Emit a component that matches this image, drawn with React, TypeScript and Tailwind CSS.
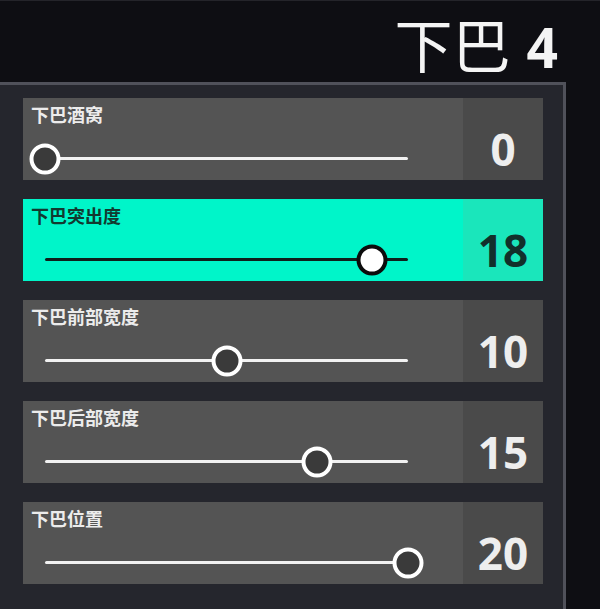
import React from "react";

type Row = { label: string; value: number; active?: boolean };

const rows: Row[] = [
  { label: "下巴酒窝", value: 0 },
  { label: "下巴突出度", value: 18, active: true },
  { label: "下巴前部宽度", value: 10 },
  { label: "下巴后部宽度", value: 15 },
  { label: "下巴位置", value: 20 },
];

const cjk = { fontFamily: '"Noto Sans CJK SC", "Noto Sans", sans-serif' };
const num = { fontFamily: '"Noto Sans", "Roboto", sans-serif' };

function SliderRow({ label, value, active }: Row) {
  const pct = (value / 20) * 100;
  return (
    <div
      className={`flex h-[82px] w-[520px] ${active ? "bg-[#00f5c9]" : "bg-[#545454]"}`}
    >
      <div className="flex-1 flex flex-col">
        <div
          className={`pt-[7px] pl-[8px] text-[18px] leading-[18px] font-bold ${
            active ? "text-[#123a30]" : "text-[#ececec]"
          }`}
          style={cjk}
        >
          {label}
        </div>
        <div className="relative ml-[22px] mt-[34px] w-[363px] h-[3px]">
          <div className={`absolute inset-0 rounded-full ${active ? "bg-[#0f1f1b]" : "bg-[#f2f2f2]"}`} />
          <div
            className={`absolute top-1/2 w-[31px] h-[31px] -translate-x-1/2 -translate-y-1/2 rounded-full border-[4px] ${
              active ? "bg-white border-[#0c0c0c]" : "bg-[#3a3a3a] border-white"
            }`}
            style={{ left: `${pct}%` }}
          />
        </div>
      </div>
      <div
        className={`w-[80px] flex items-center justify-center pt-[20px] text-[44px] leading-none font-bold ${
          active ? "bg-[#1ae6bb] text-[#12302a]" : "bg-[#4a4a4a] text-[#eeeeee]"
        }`}
        style={num}
      >
        {value}
      </div>
    </div>
  );
}

export default function App() {
  return (
    <div className="w-[600px] h-[609px] bg-[#0e0e13] overflow-hidden flex flex-col border-t border-[#24242a]">
      <div className="h-[81px] flex items-end justify-end pr-[42px] pb-[8px]">
        <div className="flex items-baseline text-[#f4f4f4] text-[58px] leading-none">
          <span className="font-normal" style={cjk}>下巴</span>
          <span className="ml-[16px] font-bold text-[55px]" style={num}>4</span>
        </div>
      </div>
      <div className="flex-1 w-[566px] border-t-[3px] border-r-[3px] border-[#50515a] bg-[#25262d] pt-[13px] pl-[23px] flex flex-col gap-[19px]">
        {rows.map((r) => (
          <SliderRow key={r.label} {...r} />
        ))}
      </div>
    </div>
  );
}
